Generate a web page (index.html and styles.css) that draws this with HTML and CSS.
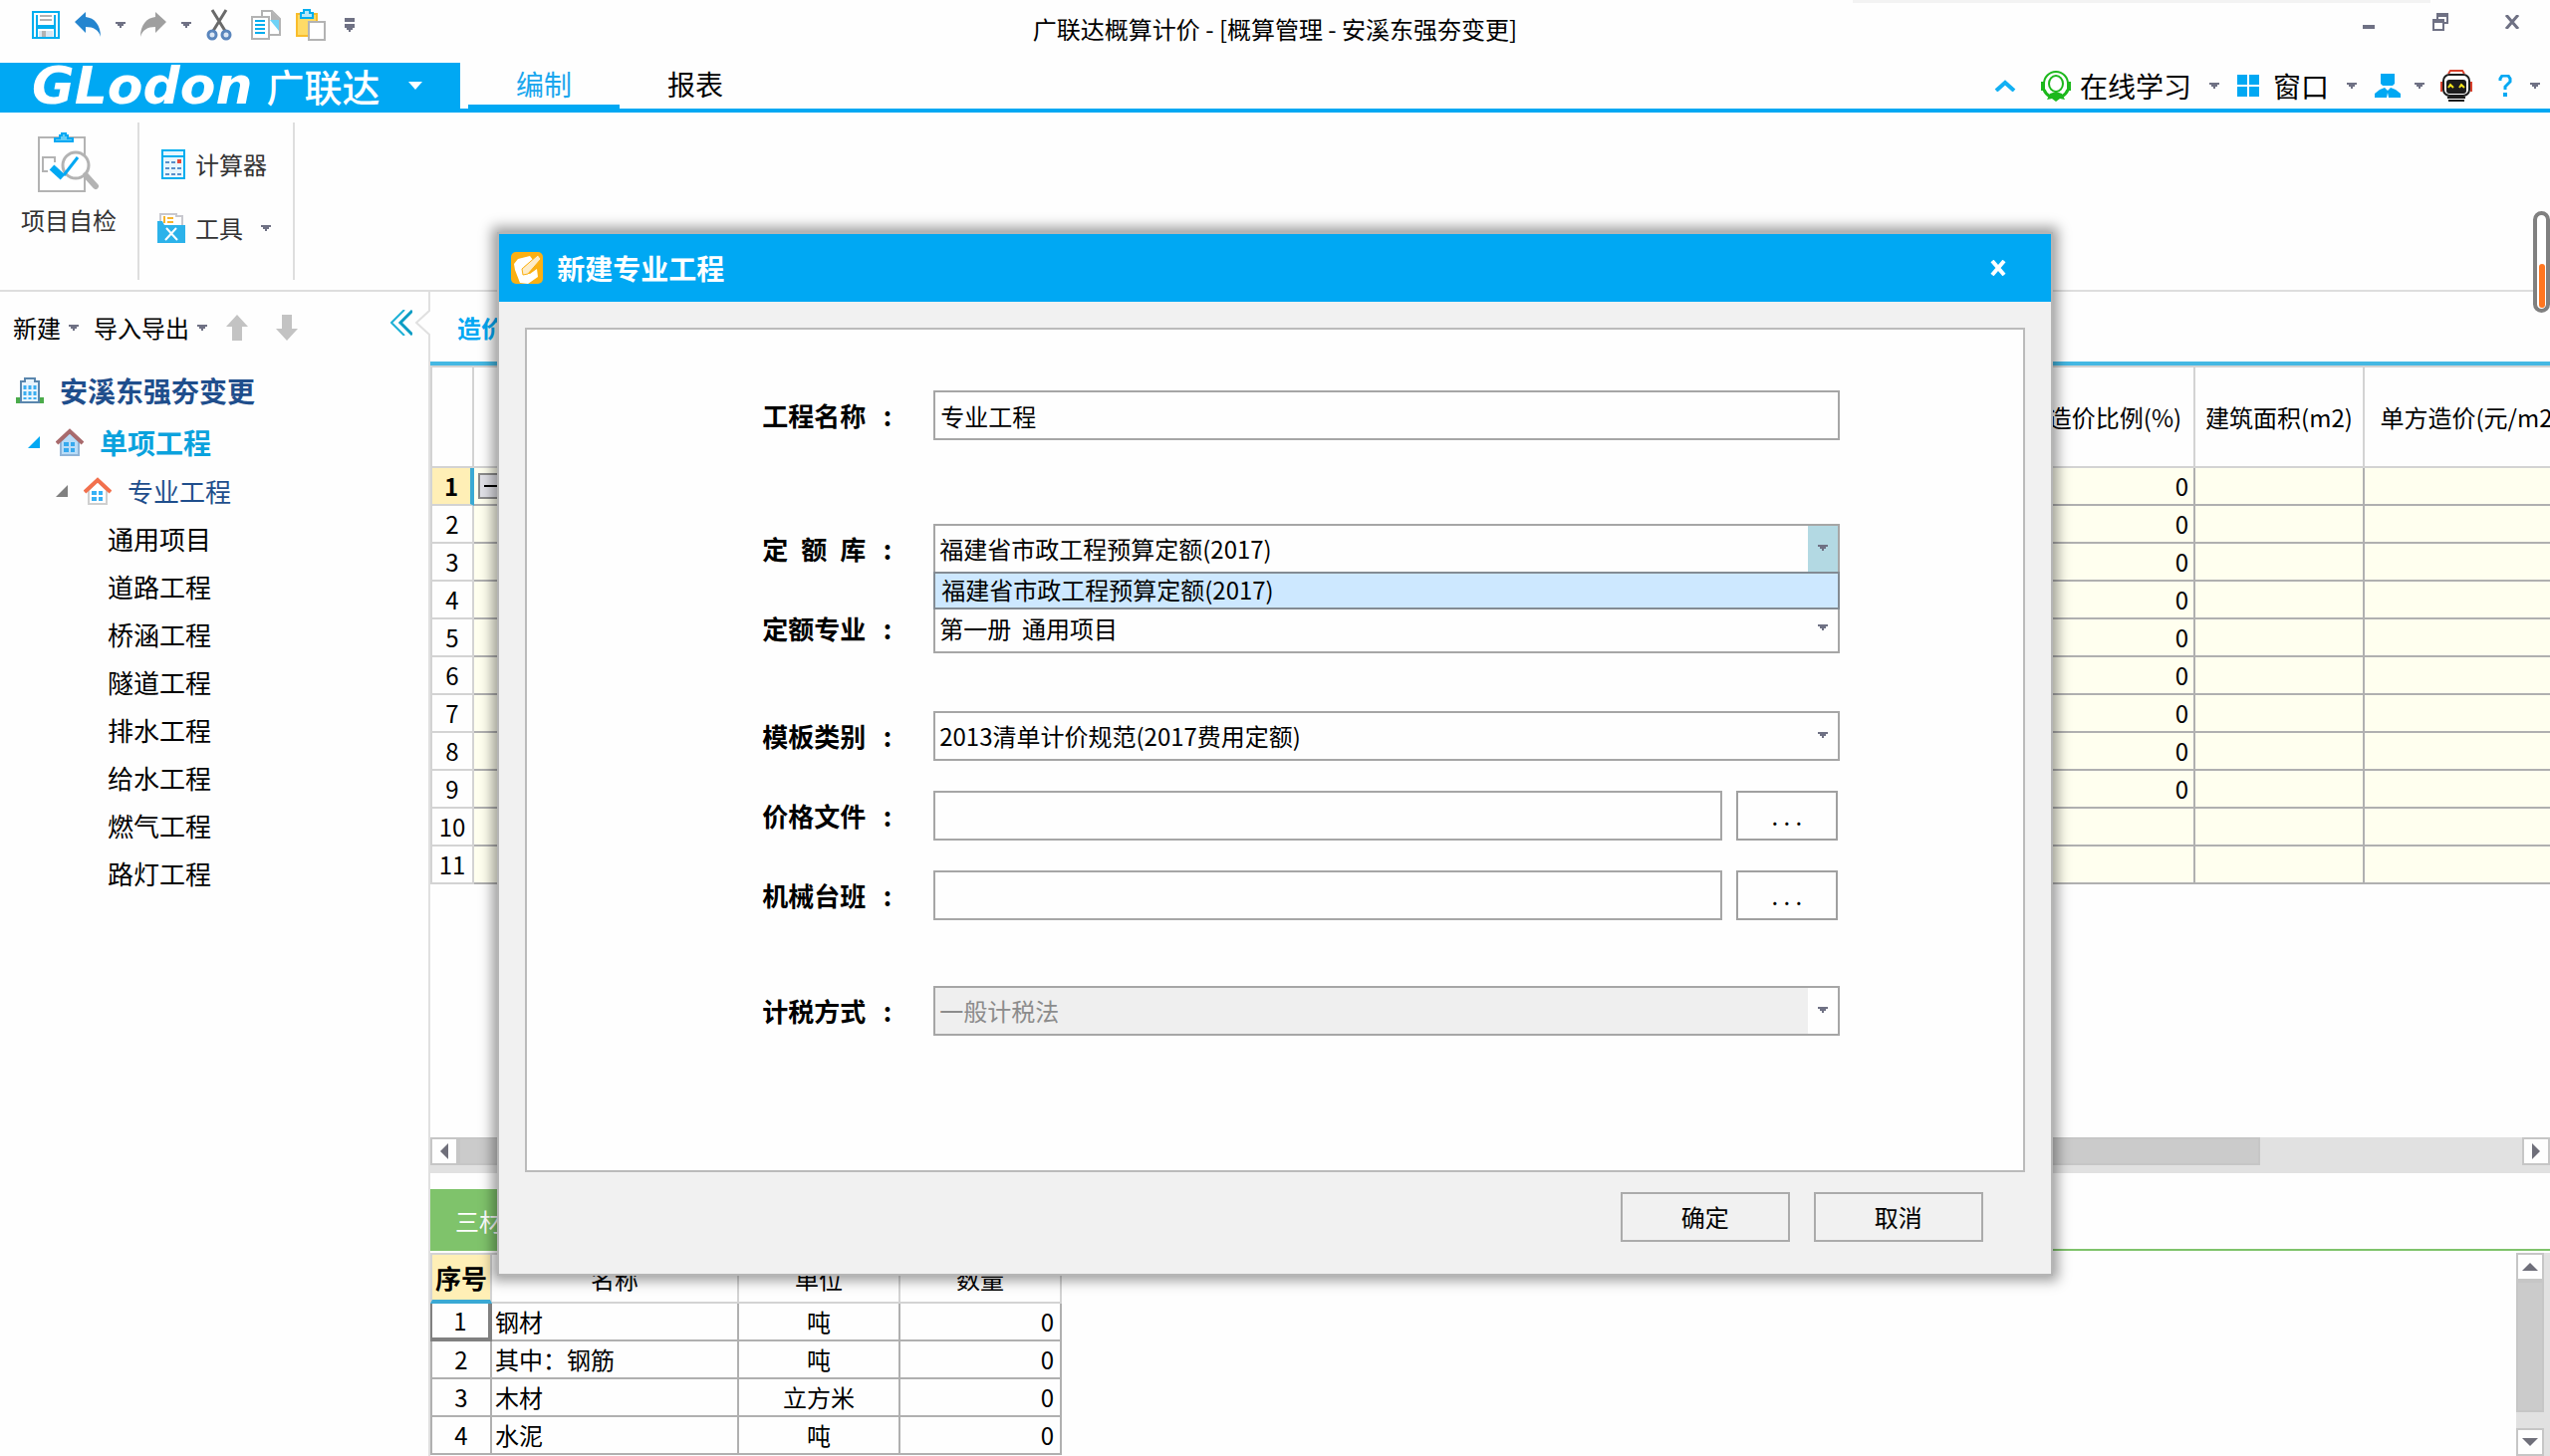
FILE: index.html
```html
<!DOCTYPE html>
<html lang="zh-CN">
<head>
<meta charset="utf-8">
<title>广联达概算计价</title>
<link rel="stylesheet" href="styles.css">
</head>
<body>
<svg class="sprite" aria-hidden="true">
  <symbol id="caret" viewBox="0 0 10 6"><path d="M0 0h10v2H8v2H6v2H4V4H2V2H0z" fill="#6f7184"/></symbol>
</svg>

<header class="titlebar">
  <div class="quick">
    <button class="icon-btn" aria-label="保存"><svg width="28" height="28" viewBox="0 0 28 28"><path d="M1 1h26v26H1z" fill="#fff" stroke="#00aeef" stroke-width="2"/><path d="M5 4v22M23 4v22" stroke="#00aeef" stroke-width="2"/><path d="M8 5h12M8 9h12" stroke="#b3b3b3" stroke-width="2"/><path d="M6 14h16v4H6z" fill="#00aeef"/><path d="M7 20h14v6H7z" fill="#d9e6f2"/><path d="M10 20h4v6h-4z" fill="#b3b3b3"/></svg></button>
    <button class="icon-btn gap-m" aria-label="撤销"><svg width="26" height="26" viewBox="0 0 26 26"><path d="M11 0v5c9 1 15 8 15 20-2-7-7-10-15-10v6L0 10z" fill="#2585cf"/></svg></button>
    <button class="icon-btn gap-m" aria-label="撤销列表"><svg width="10" height="6"><use href="#caret"/></svg></button>
    <button class="icon-btn gap-m" aria-label="恢复"><svg width="26" height="26" viewBox="0 0 26 26"><path d="M15 0v5C6 6 0 13 0 25c2-7 7-10 15-10v6l11-11z" fill="#9f9f9f"/></svg></button>
    <button class="icon-btn gap-m" aria-label="恢复列表"><svg width="10" height="6"><use href="#caret"/></svg></button>
    <button class="icon-btn gap-m" aria-label="剪切"><svg width="26" height="32" viewBox="0 0 26 32"><path d="M6 1l13 21M20 1L7 22" stroke="#6a6a6a" stroke-width="3" fill="none"/><circle cx="6" cy="26" r="4" fill="#dbe7f5" stroke="#5a86bd" stroke-width="3"/><circle cx="20" cy="26" r="4" fill="#dbe7f5" stroke="#5a86bd" stroke-width="3"/></svg></button>
    <button class="icon-btn gap-l" aria-label="复制"><svg width="30" height="30" viewBox="0 0 30 30"><path d="M11 1h10l8 8v16H11z" fill="#fff" stroke="#b3b3b3" stroke-width="2"/><path d="M20 1l9 9h-9z" fill="#b3b3b3"/><path d="M19 10h9v11z" fill="#6fd3f7"/><path d="M1 7h17v22H1z" fill="#fff" stroke="#b3b3b3" stroke-width="2"/><path d="M4 11h10M4 15h10M4 19h10M4 23h10" stroke="#00aeef" stroke-width="2"/></svg></button>
    <button class="icon-btn gap-m" aria-label="粘贴"><svg width="30" height="32" viewBox="0 0 30 32"><path d="M1 5h20v22H1z" fill="#ffdb66" stroke="#f9bd2b" stroke-width="2"/><path d="M5 9V4h3V1h6v3h3v5z" fill="#b5e8fa" stroke="#00aeef" stroke-width="2"/><path d="M13 13h16v18H13z" fill="#fff" stroke="#b3b3b3" stroke-width="2"/></svg></button>
    <button class="icon-btn gap-l" aria-label="自定义"><svg width="10" height="14" viewBox="0 0 10 14"><path d="M0 0h10v4H0zM0 6h10v4H8v2H6v2H4v-2H2v-2H0z" fill="#6f7184"/></svg></button>
  </div>
  <h1 class="app-title">广联达概算计价 - [概算管理 - 安溪东强夯变更]</h1>
  <div class="win-controls">
    <button class="icon-btn" aria-label="最小化"><svg width="12" height="16" viewBox="0 0 12 16"><path d="M0 11h12v4H0z" fill="#6f7184"/></svg></button>
    <button class="icon-btn" aria-label="还原"><svg width="16" height="18" viewBox="0 0 16 18"><path d="M5 6V2h10v8h-3" fill="none" stroke="#6f7184" stroke-width="2"/><path d="M4 0h12v4H4zM0 6h12v4H0z" fill="#6f7184"/><path d="M1 8h10v9H1z" fill="none" stroke="#6f7184" stroke-width="2"/></svg></button>
    <button class="icon-btn" aria-label="关闭"><svg width="16" height="14" viewBox="0 0 16 14"><path d="M2 0l12 14M14 0L2 14" stroke="#6f7184" stroke-width="3"/></svg></button>
  </div>
</header>

<nav class="menubar">
  <button class="brand"><span class="brand-latin">GLodon</span><span class="brand-cn">广联达</span><svg width="14" height="8" viewBox="0 0 14 8"><path d="M0 0h14L7 8z" fill="#fff"/></svg></button>
  <a class="menu-tab active" href="#edit">编制</a>
  <a class="menu-tab" href="#report">报表</a>
  <div class="menu-right">
    <button class="icon-btn" aria-label="收起功能区"><svg width="22" height="12" viewBox="0 0 22 12"><path d="M2 11l9-8 9 8" fill="none" stroke="#12b0f3" stroke-width="4"/></svg></button>
    <button class="menu-item learn"><svg width="32" height="32" viewBox="0 0 32 32"><path d="M4 18V14a12 12 0 0 1 24 0v4" fill="none" stroke="#1cb81c" stroke-width="2"/><path d="M3 12v9M29 12v9" stroke="#1cb81c" stroke-width="4"/><ellipse cx="16" cy="14" rx="7" ry="8" fill="#fff" stroke="#1cb81c" stroke-width="2"/><path d="M4 20c1 3 3 5 6 7M28 20c-1 3-3 5-6 7" fill="none" stroke="#1cb81c" stroke-width="3"/><path d="M7 30l3-6 6-2 6 2 3 6-5-1-4 3-4-3z" fill="#1cb81c"/></svg><span>在线学习</span></button>
    <svg class="caret" width="10" height="6"><use href="#caret"/></svg>
    <button class="menu-item"><svg width="22" height="22" viewBox="0 0 22 22"><path d="M0 0h10v10H0zM12 0h10v10H12zM0 12h10v10H0zM12 12h10v10H12z" fill="#00a8f3"/></svg><span>窗口</span></button>
    <svg class="caret" width="10" height="6"><use href="#caret"/></svg>
    <button class="icon-btn" aria-label="账户"><svg width="26" height="24" viewBox="0 0 26 24"><path d="M6 0h14v10l-2 2H8l-2-2zM0 24v-4l5-4 5-2 3 3 3-3 5 2 5 4v4H14l-1-5-1 5z" fill="#00a8f3"/></svg></button>
    <svg class="caret tight" width="10" height="6"><use href="#caret"/></svg>
    <button class="icon-btn" aria-label="智能助手"><svg width="32" height="32" viewBox="0 0 32 32"><path d="M8 4l2-3h12l2 3M1 12v10M31 12v10" fill="none" stroke="#d8402c" stroke-width="2"/><rect x="3" y="5" width="26" height="21" rx="6" fill="#fff" stroke="#1c1c1c" stroke-width="2"/><rect x="6" y="10" width="20" height="14" rx="3" fill="#1c1c1c"/><path d="M8 18l2-3 3 3M19 18l2-3 3 3" fill="none" stroke="#f2e41f" stroke-width="2"/><path d="M7 28h18M8 31h16" stroke="#1c1c1c" stroke-width="2"/></svg></button>
    <button class="icon-btn help" aria-label="帮助"><svg width="14" height="22" viewBox="0 0 14 22"><path d="M2 6V4l2-3h6l2 3v3l-5 5v3" fill="none" stroke="#00a8f3" stroke-width="3"/><path d="M5 18h4v4H5z" fill="#00a8f3"/></svg></button>
    <svg class="caret" width="10" height="6"><use href="#caret"/></svg>
  </div>
</nav>

<section class="ribbon">
  <div class="ribbon-group check-group">
    <button class="big-tool"><svg width="62" height="60" viewBox="0 0 62 60"><path d="M1 5h46v54H1z" fill="#fff" stroke="#b3b3b3" stroke-width="2"/><path d="M17 9V6h5V3h2V1h4v2h2v3h5v3z" fill="#66cdf5" stroke="#00a8f3" stroke-width="2"/><path d="M17 30v-5H5v14h5" fill="none" stroke="#b3b3b3" stroke-width="2"/><circle cx="38" cy="33" r="13" fill="#fff" stroke="#b3b3b3" stroke-width="3"/><path d="M14 35l11 10" stroke="#00a8f3" stroke-width="7"/><path d="M26 43l14-18" stroke="#00a8f3" stroke-width="3"/><path d="M48 43l10 11" stroke="#b3b3b3" stroke-width="6" stroke-linecap="round"/></svg><span>项目自检</span></button>
  </div>
  <div class="ribbon-group tool-group">
    <button class="tool"><svg width="28" height="30" viewBox="0 0 28 30"><path d="M5 1h22v28H5z" fill="#e8f6fd" stroke="#00aeef" stroke-width="2"/><path d="M5 7h22" stroke="#00aeef" stroke-width="2"/><path d="M8 13h4M14 13h4M8 19h4M14 19h4M20 19h4M8 25h4M14 25h4M20 25h4" stroke="#5a8fc8" stroke-width="2"/><path d="M20 10h4v4h-4z" fill="#e8483a"/></svg><span>计算器</span></button>
    <button class="tool"><svg width="28" height="30" viewBox="0 0 28 30"><path d="M3 10V1h16v2h6v10" fill="#fff" stroke="#c8c8ce" stroke-width="2"/><path d="M7 3v7M10 5h6M10 9h6" stroke="#f7b52c" stroke-width="2"/><path d="M0 8h5l2 4h21v18H0z" fill="#2cb2ea"/><path d="M9 15l11 12M19 15l-11 12" stroke="#fff" stroke-width="2"/></svg><span>工具</span><svg class="tool-caret" width="10" height="6"><use href="#caret"/></svg></button>
  </div>
</section>

<main class="workspace">
  <aside class="sidebar">
    <div class="side-tools">
      <button class="side-btn">新建<svg width="10" height="6"><use href="#caret"/></svg></button>
      <button class="side-btn">导入导出<svg width="10" height="6"><use href="#caret"/></svg></button>
      <button class="icon-btn" aria-label="上移"><svg width="22" height="26" viewBox="0 0 22 26"><path d="M11 0l11 12h-6v14H6V12H0z" fill="#c3c3c3"/></svg></button>
      <button class="icon-btn down" aria-label="下移"><svg width="22" height="26" viewBox="0 0 22 26"><path d="M11 26l11-12h-6V0H6v14H0z" fill="#c3c3c3"/></svg></button>
      <button class="icon-btn collapse" aria-label="折叠"><svg width="22" height="26" viewBox="0 0 22 26"><path d="M14 0L1 13l13 13" fill="none" stroke="#1fb1d6" stroke-width="2"/><path d="M22 1L10 13l12 12" fill="none" stroke="#0a9cc4" stroke-width="3"/></svg></button>
      <svg class="notch" width="16" height="26" viewBox="0 0 16 26"><path d="M13 0h3v26h-3z" fill="#fefefe"/><path d="M15 0v1L2 13l13 12v1" fill="none" stroke="#e0e0e0" stroke-width="2"/></svg>
    </div>
    <ul class="tree">
      <li class="node root"><svg width="28" height="26" viewBox="0 0 28 26"><path d="M0 20h5v6H0zM23 20h5v6h-5z" fill="#4bab4b"/><path d="M5 25V4h4V1h10v3h4v21z" fill="#e8f4fd" stroke="#5a86ad" stroke-width="2"/><path d="M9 8v14M14 8v14M19 8v14" stroke="#3aaef2" stroke-width="3" stroke-dasharray="4 2"/></svg><span>安溪东强夯变更</span></li>
      <li class="node single"><svg width="12" height="12" viewBox="0 0 12 12"><path d="M12 0v12H0z" fill="#00a8f3"/></svg><svg width="28" height="28" viewBox="0 0 28 28"><path d="M5 13v14h18V13l-9-9z" fill="#b9dcf7" stroke="#8fb4d8" stroke-width="2"/><path d="M1 15L14 3l13 12" fill="none" stroke="#a86a6c" stroke-width="4"/><path d="M8 14h5v4H8zM15 14h4v4h-4zM8 20h5v4H8zM15 20h4v4h-4z" fill="#35a9ee"/></svg><span>单项工程</span></li>
      <li class="node major"><svg width="12" height="12" viewBox="0 0 12 12"><path d="M12 0v12H0z" fill="#808080"/></svg><svg width="28" height="28" viewBox="0 0 28 28"><path d="M5 13v14h18V13l-9-9z" fill="#fff" stroke="#cfcfcf" stroke-width="2"/><path d="M1 15L14 3l13 12" fill="none" stroke="#f2704d" stroke-width="4"/><path d="M8 14h5v4H8zM15 14h4v4h-4zM8 20h5v4H8zM15 20h4v4h-4z" fill="#35b1f5"/></svg><span>专业工程</span></li>
      <li class="node leaf">通用项目</li>
      <li class="node leaf">道路工程</li>
      <li class="node leaf">桥涵工程</li>
      <li class="node leaf">隧道工程</li>
      <li class="node leaf">排水工程</li>
      <li class="node leaf">给水工程</li>
      <li class="node leaf">燃气工程</li>
      <li class="node leaf">路灯工程</li>
    </ul>
  </aside>

  <div class="content">
    <div class="content-tabs"><a href="#cost">造价</a></div>
    <div class="grid-pane">
      <table class="cost-table">
        <colgroup><col class="c-idx"><col><col class="c-ratio"><col class="c-area"><col class="c-unit"></colgroup>
        <thead><tr><th></th><th></th><th>造价比例(%)</th><th>建筑面积(m2)</th><th>单方造价(元/m2)</th></tr></thead>
        <tbody>
          <tr class="current"><th>1</th><td><button class="expander" aria-label="折叠行"></button></td><td>0</td><td></td><td></td></tr>
          <tr><th>2</th><td></td><td>0</td><td></td><td></td></tr>
          <tr><th>3</th><td></td><td>0</td><td></td><td></td></tr>
          <tr><th>4</th><td></td><td>0</td><td></td><td></td></tr>
          <tr><th>5</th><td></td><td>0</td><td></td><td></td></tr>
          <tr><th>6</th><td></td><td>0</td><td></td><td></td></tr>
          <tr><th>7</th><td></td><td>0</td><td></td><td></td></tr>
          <tr><th>8</th><td></td><td>0</td><td></td><td></td></tr>
          <tr><th>9</th><td></td><td>0</td><td></td><td></td></tr>
          <tr><th>10</th><td></td><td></td><td></td><td></td></tr>
          <tr><th>11</th><td></td><td></td><td></td><td></td></tr>
        </tbody>
      </table>
    </div>
    <div class="hscroll">
      <button class="scroll-btn" aria-label="向左"><svg width="8" height="16" viewBox="0 0 8 16"><path d="M8 0v16L0 8z" fill="#6f6f7a"/></svg></button>
      <div class="hthumb"></div>
      <button class="scroll-btn last" aria-label="向右"><svg width="8" height="16" viewBox="0 0 8 16"><path d="M0 0v16l8-8z" fill="#6f6f7a"/></svg></button>
    </div>
    <div class="detail-tabs"><a href="#materials">三材汇总</a></div>
    <div class="detail-pane">
      <table class="material-table">
        <colgroup><col class="m-idx"><col class="m-name"><col class="m-num"><col class="m-num"></colgroup>
        <thead><tr><th>序号</th><th>名称</th><th>单位</th><th>数量</th></tr></thead>
        <tbody>
          <tr class="current"><td>1</td><td>钢材</td><td>吨</td><td>0</td></tr>
          <tr><td>2</td><td>其中：钢筋</td><td>吨</td><td>0</td></tr>
          <tr><td>3</td><td>木材</td><td>立方米</td><td>0</td></tr>
          <tr><td>4</td><td>水泥</td><td>吨</td><td>0</td></tr>
        </tbody>
      </table>
      <div class="vscroll">
        <button class="scroll-btn" aria-label="向上"><svg width="16" height="8" viewBox="0 0 16 8"><path d="M0 8h16L8 0z" fill="#6f6f7a"/></svg></button>
        <div class="vthumb"></div>
        <button class="scroll-btn last" aria-label="向下"><svg width="16" height="8" viewBox="0 0 16 8"><path d="M0 0h16L8 8z" fill="#6f6f7a"/></svg></button>
      </div>
    </div>
  </div>
</main>

<div class="top-shade"></div>
<div class="level-pill"><div class="level"></div></div>

<dialog class="dialog" open aria-labelledby="dlg-title">
  <div class="dlg-head">
    <svg width="32" height="32" viewBox="0 0 32 32"><rect width="32" height="32" rx="5" fill="#fbb012"/><path d="M3 12L7 7l12-3 3 4-9 7v6l6 1 7-5 1 8-10 7-8-1-5-13z" fill="#fff"/><path d="M11 17l1 6 5-1L30 7l-3-4z" fill="#fdecc8" stroke="#fbb012" stroke-width="1"/></svg>
    <h2 id="dlg-title">新建专业工程</h2>
    <button class="icon-btn" aria-label="关闭对话框"><svg width="18" height="16" viewBox="0 0 18 16"><path d="M3 1l12 14M15 1L3 15" stroke="#fff" stroke-width="4"/></svg></button>
  </div>
  <form class="dlg-body">
    <div class="panel">
      <div class="fields">
        <div class="field"><label for="name"><span>工程名称</span><span>:</span></label><input id="name" type="text" value="专业工程"></div>
      </div>
      <div class="fields library">
        <div class="field"><label for="lib"><span>定&ensp;额&ensp;库</span><span>:</span></label>
          <div class="select open"><select id="lib"><option>福建省市政工程预算定额(2017)</option></select><span class="arrow"><svg width="10" height="6"><use href="#caret"/></svg></span>
            <div class="options">福建省市政工程预算定额(2017)</div></div></div>
        <div class="field"><label for="spec"><span>定额专业</span><span>:</span></label>
          <div class="select"><select id="spec"><option>第一册&nbsp;&nbsp;通用项目</option></select><span class="arrow"><svg width="10" height="6"><use href="#caret"/></svg></span></div></div>
      </div>
      <div class="fields template">
        <div class="field"><label for="tpl"><span>模板类别</span><span>:</span></label>
          <div class="select"><select id="tpl"><option>2013清单计价规范(2017费用定额)</option></select><span class="arrow"><svg width="10" height="6"><use href="#caret"/></svg></span></div></div>
        <div class="field"><label for="price"><span>价格文件</span><span>:</span></label><div class="browse"><input id="price" type="text"><button type="button">. . .</button></div></div>
        <div class="field"><label for="machine"><span>机械台班</span><span>:</span></label><div class="browse"><input id="machine" type="text"><button type="button">. . .</button></div></div>
      </div>
      <div class="fields tax">
        <div class="field"><label for="tax"><span>计税方式</span><span>:</span></label>
          <div class="select"><select id="tax" disabled><option>一般计税法</option></select><span class="arrow"><svg width="10" height="6"><use href="#caret"/></svg></span></div></div>
      </div>
    </div>
    <div class="dlg-actions"><button type="button">确定</button><button type="button">取消</button></div>
  </form>
</dialog>
</body>
</html>
```
FILE: styles.css
```css
:root {
  --blue: #00a8f3;
  --line: #d3d3d3;
  --cell-line: #b0b0b0;
  --field-line: #a6a6a6;
  --page: #fefefe;
}
* { box-sizing: border-box; }
body {
  margin: 0;
  height: 100vh;
  overflow: hidden;
  display: flex;
  flex-direction: column;
  background: var(--page);
  color: #000;
  font: 24px/36px "Noto Sans CJK SC", sans-serif;
}
button, input, select { font: inherit; color: inherit; margin: 0; padding: 0; border: 0; background: none; border-radius: 0; }
a { color: inherit; text-decoration: none; }
h1, h2, ul { margin: 0; padding: 0; font: inherit; list-style: none; }
svg { display: block; flex: none; }
.sprite { width: 0; height: 0; position: absolute; }
.icon-btn { display: flex; align-items: center; justify-content: center; flex: none; }

/* Title bar */
.titlebar { display: grid; grid-template-columns: 1fr auto 1fr; height: 63px; flex: none; }
.quick { display: flex; align-items: center; height: 50px; padding-left: 32px; }
.gap-m { margin-left: 15px; }
.gap-l { margin-left: 19px; }
.app-title { line-height: 58px; }
.win-controls { display: flex; justify-content: flex-end; gap: 32px; height: 44px; padding-right: 18px; }
.win-controls .icon-btn { width: 40px; }

/* Menu bar */
.menubar { display: flex; height: 50px; flex: none; border-bottom: 4px solid var(--blue); font-size: 28px; }
.brand { display: flex; align-items: center; width: 462px; padding-left: 32px; background: var(--blue); color: #fff; }
.brand-latin { font: italic 700 52px/46px "DejaVu Sans", sans-serif; }
.brand-cn { margin-left: 14px; font-size: 38px; line-height: 46px; font-weight: 500; }
.brand svg { margin-left: 28px; }
.menu-tab { width: 152px; text-align: center; line-height: 42px; border-bottom: 4px solid transparent; }
.menu-tab.active { margin-left: 8px; color: #1aa7ee; border-color: var(--blue); }
.menu-right { display: flex; align-items: center; margin-left: auto; padding-right: 10px; }
.menu-item { display: flex; align-items: center; gap: 14px; line-height: 46px; }
.menu-right .caret { margin: 0 18px; }
.menu-right .tight { margin: 0 16px 0 14px; }
.menu-right .caret:last-child { margin-right: 0; }
.learn { margin-left: 24px; gap: 8px; }
.help { margin-left: 26px; }

/* Ribbon */
.ribbon { display: flex; height: 180px; flex: none; padding: 10px 0; border-bottom: 2px solid #dedede; }
.ribbon-group { border-right: 2px solid #dedede; color: #333; }
.check-group { width: 140px; padding-top: 10px; }
.big-tool { display: flex; flex-direction: column; align-items: center; gap: 10px; width: 100%; }
.tool-group { width: 156px; padding: 14px 0 0 18px; display: flex; flex-direction: column; gap: 8px; }
.tool { display: flex; align-items: center; gap: 10px; height: 56px; line-height: 56px; }
.tool-caret { margin-left: 8px; }

/* Workspace */
.workspace { display: flex; flex: 1; min-height: 0; }
.sidebar { width: 432px; flex: none; border-right: 2px solid #e0e0e0; }
.side-tools { display: flex; align-items: center; height: 72px; padding-left: 13px; }
.side-btn { display: flex; align-items: center; gap: 8px; margin-right: 15px; }
.side-btn + .icon-btn { margin-left: 4px; }
.down { margin-left: 28px; }
.collapse { margin: 0 2px 10px auto; }
.notch { margin: 0 -2px 10px 0; }
.node { display: flex; align-items: center; height: 48px; font-size: 26px; }
.root { height: 54px; padding-left: 16px; gap: 16px; color: #1f4e8c; font-weight: 700; font-size: 28px; }
.single { height: 50px; padding-left: 28px; gap: 16px; color: #0aa2dd; font-weight: 700; font-size: 28px; }
.major { padding-left: 56px; gap: 16px; color: #1f4e8c; }
.leaf { padding-left: 108px; }

.content { flex: 1; min-width: 0; display: flex; flex-direction: column; }
.content-tabs { height: 74px; flex: none; padding-left: 27px; line-height: 72px; color: var(--blue); font-weight: 700; border-bottom: 4px solid #45b8e3; }
.grid-pane { flex: 1; min-height: 0; overflow: hidden; }
table { border-collapse: separate; border-spacing: 0; table-layout: fixed; }
th, td { padding: 0; font-weight: 400; height: 38px; line-height: 34px; border: 0 solid var(--cell-line); border-width: 0 2px 2px 0; white-space: nowrap; overflow: hidden; }
th { border-color: var(--line); }
th:first-child, td:first-child { border-left-width: 2px; }
.cost-table { width: calc(100% + 28px); }
.c-idx { width: 44px; }
.c-ratio { width: 160px; }
.c-area { width: 170px; }
.c-unit { width: 214px; }
.cost-table thead th { height: 103px; border-top-width: 2px; }
.cost-table td { background: #ffffef; }
.cost-table td:nth-child(3) { text-align: right; padding-right: 5px; }
.cost-table .current th { background: #ffefb6; font-weight: 700; border-right: 4px solid #3aa9d4; }
.expander { display: block; width: 26px; height: 26px; margin-left: 4px; border: 2px solid #8c8c8c; background: linear-gradient(#000, #000) 4px 10px / 16px 2px no-repeat, #e2e2e8; }

.scroll-btn { display: flex; align-items: center; justify-content: center; width: 28px; height: 28px; flex: none; background: #fefefe; border: 2px solid #c6c6c6; }
.hscroll { display: flex; height: 36px; flex: none; background: #e1e1e1; }
.hthumb { width: 85%; height: 28px; background: #cbcbcb; border: 2px solid #c6c6c6; }
.hscroll .last { margin-left: auto; }
.detail-tabs { display: flex; height: 62px; flex: none; margin-top: 16px; border-bottom: 2px solid #7fc36b; }
.detail-tabs a { width: 150px; padding-left: 25px; line-height: 64px; background: #7fc36b; color: #fff; }
.detail-pane { display: flex; justify-content: space-between; align-items: flex-start; height: 206px; flex: none; padding-top: 2px; overflow: hidden; }
.material-table { width: 634px; }
.m-idx { width: 62px; }
.m-name { width: 248px; }
.m-num { width: 162px; }
.material-table thead th { height: 51px; border-top-width: 2px; line-height: 46px; }
.material-table thead th:first-child { background: #ffefb6; font-weight: 700; border-bottom: 4px solid #3aa9d4; font-size: 26px; line-height: 44px; }
.material-table td { text-align: center; line-height: 32px; }
.material-table td:nth-child(2) { text-align: left; padding-left: 3px; }
.material-table td:last-child { text-align: right; padding-right: 6px; }
.material-table .current td:first-child { border-color: #808080; border-width: 0 4px 4px 2px; }
.vscroll { display: flex; flex-direction: column; width: 34px; height: 204px; background: #e1e1e1; }
.vthumb { width: 28px; height: 132px; background: #cbcbcb; border: 2px solid #c6c6c6; }
.vscroll .last { margin-top: auto; }

/* Floating widgets over the window */
.top-shade { position: absolute; top: 0; right: 120px; width: 580px; height: 3px; background: #f3f3f3; }
.level-pill { position: absolute; top: 212px; right: 0; width: 17px; height: 102px; display: flex; align-items: flex-end; justify-content: center; padding-bottom: 1px; border: 4px solid #808080; border-radius: 9px; background: #fff; }
.level { width: 6px; height: 44px; border-radius: 3px; background: #ff7620; }

/* Dialog */
.dialog { position: absolute; top: 233px; left: 0; right: 0; margin: 0 auto; width: 61%; max-width: none; padding: 0; border: 2px solid #b5b5b5; background: #f1f1f1; color: #000; box-shadow: 0 0 12px 5px rgba(0, 0, 0, 0.38); }
.dlg-head { display: flex; align-items: center; gap: 14px; height: 68px; padding: 0 44px 0 12px; background: var(--blue); color: #fff; }
.dlg-head h2 { flex: 1; font-size: 28px; font-weight: 700; }
.dlg-body { padding: 26px 26px 32px; }
.panel { display: flex; flex-direction: column; padding: 61px 184px 135px 236px; background: var(--page); border: 2px solid #bbb; }
.fields { display: flex; flex-direction: column; gap: 30px; }
.library { margin-top: 84px; }
.template { margin-top: 58px; }
.tax { margin-top: 66px; }
.field { display: grid; grid-template-columns: 172px 1fr; align-items: center; height: 50px; }
.field label { display: flex; justify-content: space-between; width: 130px; font-size: 26px; font-weight: 700; }
.field input, .field select { width: 100%; height: 50px; padding: 0 5px; border: 2px solid var(--field-line); background: var(--page); appearance: none; }
.field select { padding: 0 4px; }
.field select:disabled { background: #efefef; color: #8c8c8c; opacity: 1; }
.select { position: relative; display: grid; grid-template-columns: 1fr 32px; }
.select select { grid-area: 1 / 1 / 2 / 3; }
.arrow { grid-area: 1 / 2 / 2 / 3; display: flex; align-items: center; justify-content: center; margin: 2px 2px 2px 0; padding-bottom: 2px; pointer-events: none; background: var(--page); z-index: 1; }
.open .arrow { background: #b3d9e3; }
.options { position: absolute; top: 48px; left: 0; right: 0; z-index: 2; height: 38px; padding-left: 6px; line-height: 32px; background: #cde8ff; border: 2px solid #838b93; }
.browse { display: grid; grid-template-columns: 1fr 102px; gap: 14px; margin-right: 2px; }
.browse button { border: 2px solid #a0a0a0; height: 50px; }
.dlg-actions { display: flex; justify-content: flex-end; gap: 24px; padding: 20px 42px 0 0; }
.dlg-actions button { width: 170px; height: 50px; border: 2px solid #ababab; }
```
